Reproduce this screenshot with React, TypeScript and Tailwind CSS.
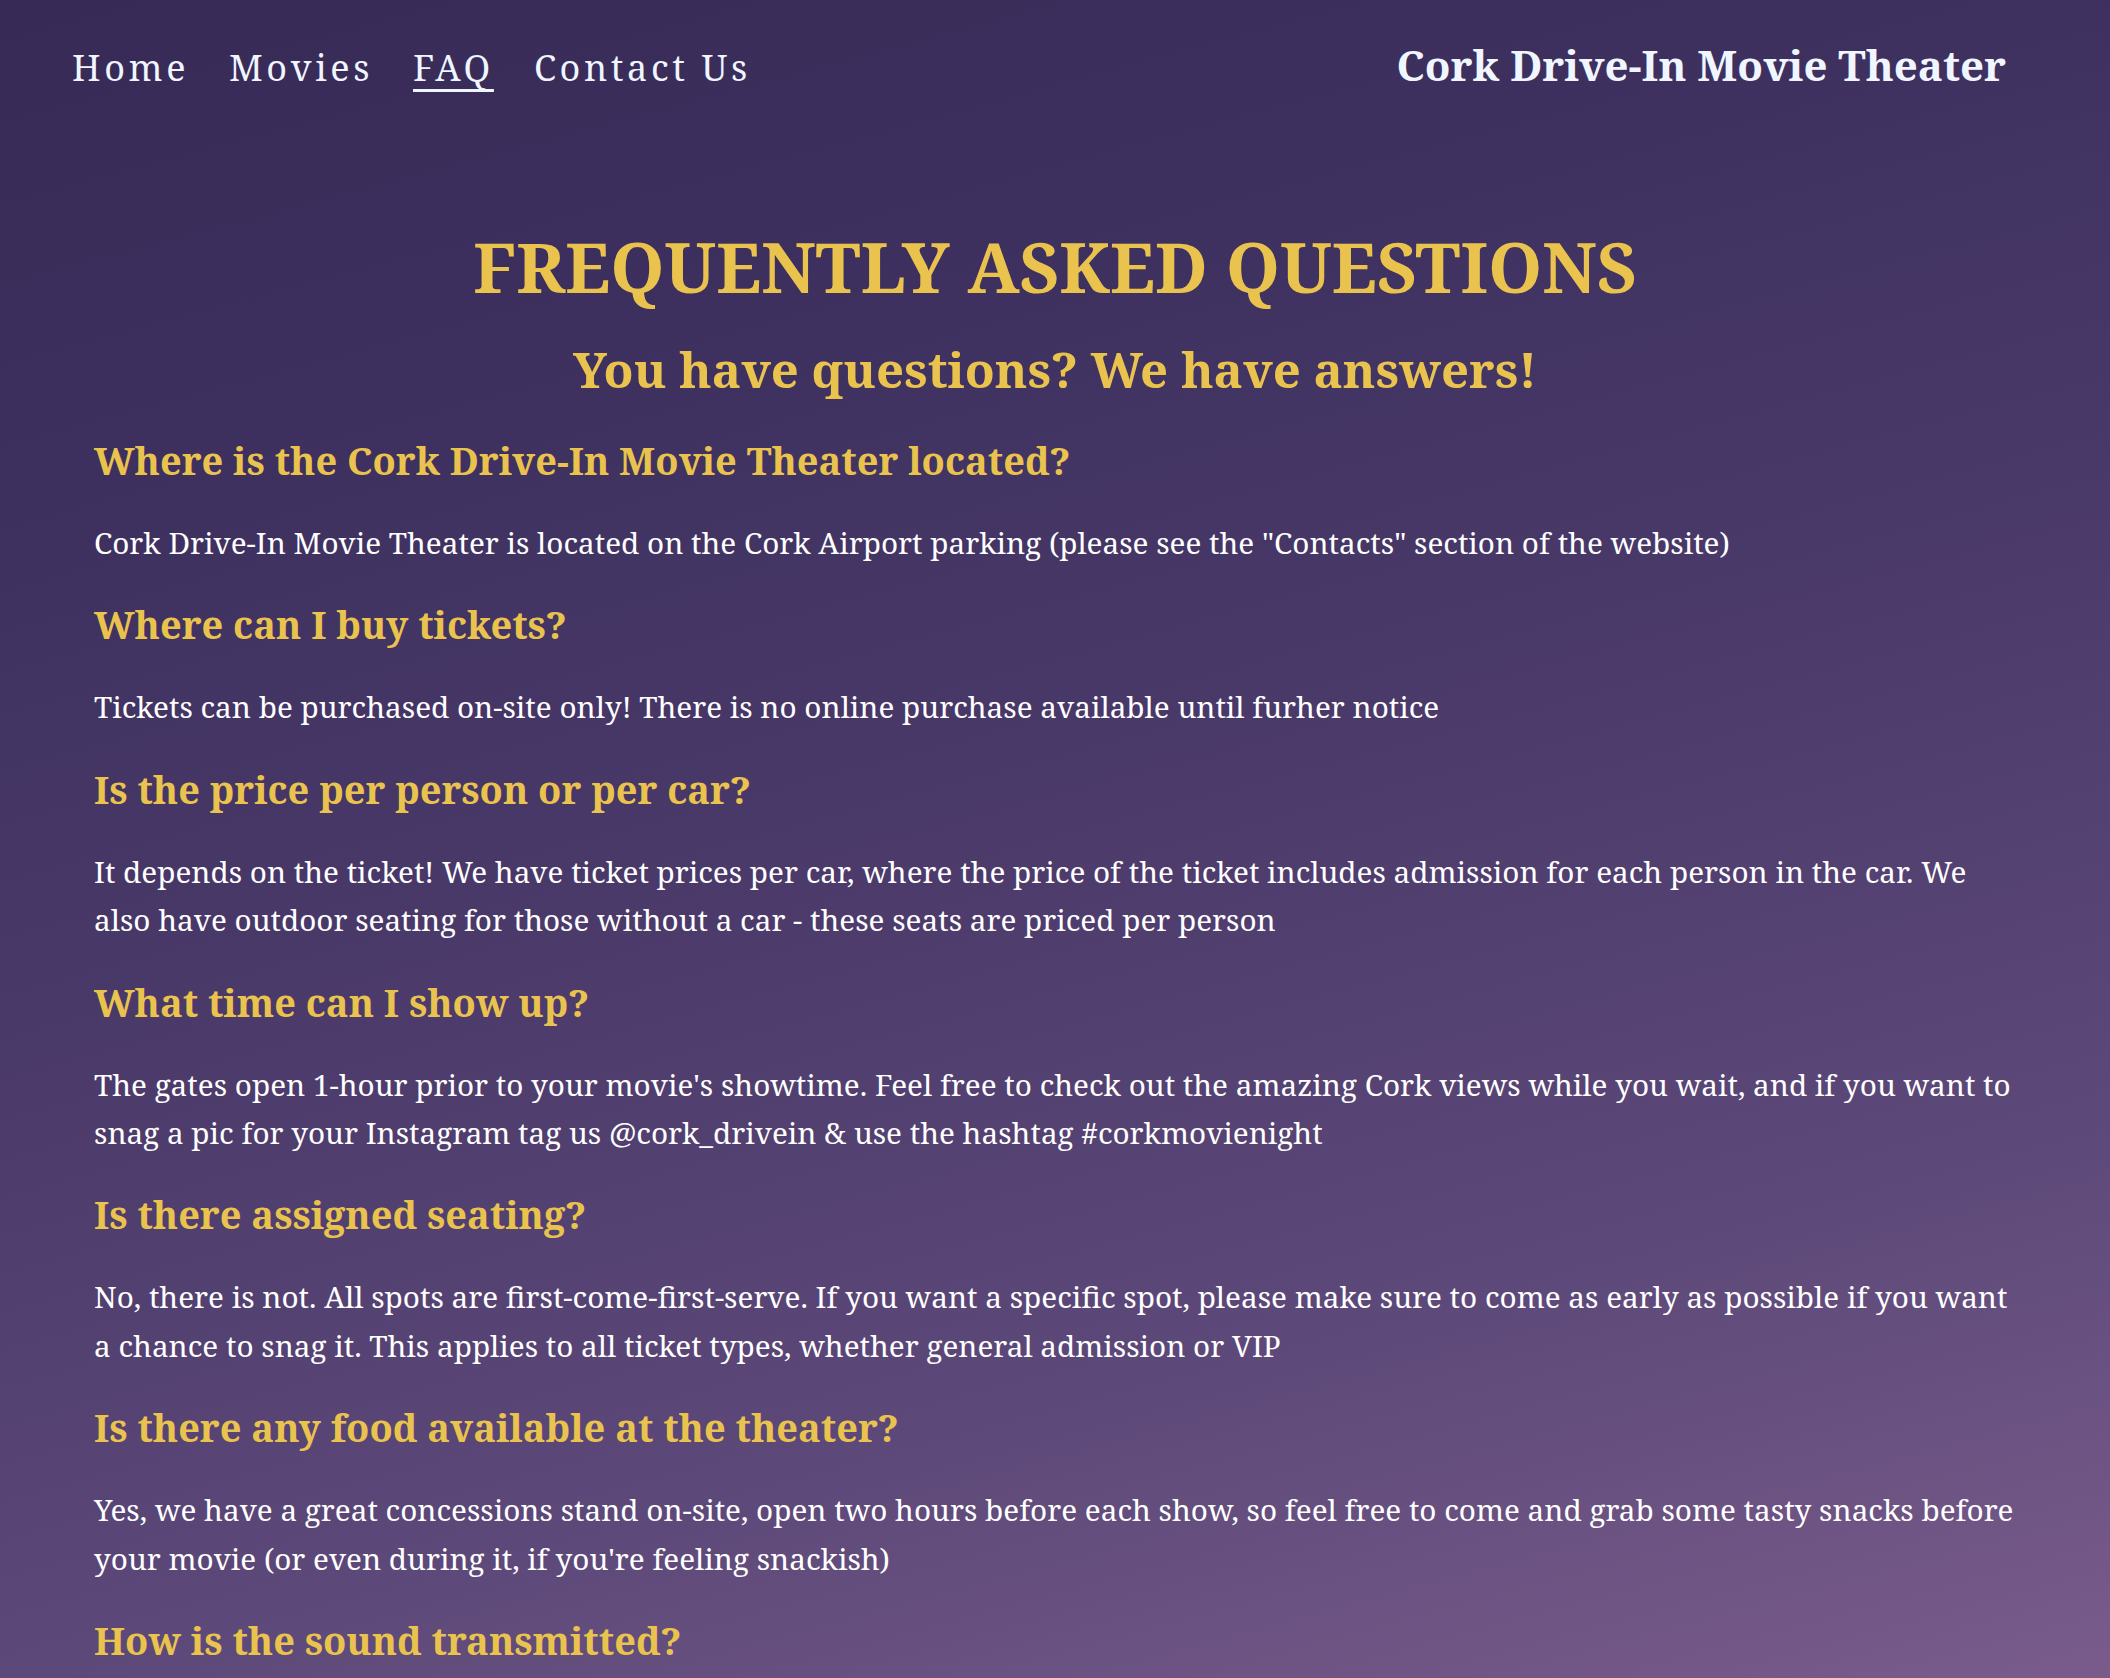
const navLinks = ["Home", "Movies", "FAQ", "Contact Us"];

const faqs = [
  {
    q: "Where is the Cork Drive-In Movie Theater located?",
    a: 'Cork Drive-In Movie Theater is located on the Cork Airport parking (please see the "Contacts" section of the website)',
  },
  {
    q: "Where can I buy tickets?",
    a: "Tickets can be purchased on-site only! There is no online purchase available until furher notice",
  },
  {
    q: "Is the price per person or per car?",
    a: "It depends on the ticket! We have ticket prices per car, where the price of the ticket includes admission for each person in the car. We also have outdoor seating for those without a car - these seats are priced per person",
  },
  {
    q: "What time can I show up?",
    a: "The gates open 1-hour prior to your movie's showtime. Feel free to check out the amazing Cork views while you wait, and if you want to snag a pic for your Instagram tag us @cork_drivein & use the hashtag #corkmovienight",
  },
  {
    q: "Is there assigned seating?",
    a: "No, there is not. All spots are first-come-first-serve. If you want a specific spot, please make sure to come as early as possible if you want a chance to snag it. This applies to all ticket types, whether general admission or VIP",
  },
  {
    q: "Is there any food available at the theater?",
    a: "Yes, we have a great concessions stand on-site, open two hours before each show, so feel free to come and grab some tasty snacks before your movie (or even during it, if you're feeling snackish)",
  },
  {
    q: "How is the sound transmitted?",
    a: "",
  },
];

function Header() {
  return (
    <header className="flex items-baseline justify-between pl-[72px] pr-[104px] pt-[40px]">
      <nav className="flex items-baseline gap-[40px] text-[36px] leading-[43px] tracking-[3.6px] text-[#f0f6ff]">
        {navLinks.map((link) => (
          <a
            key={link}
            href="#"
            className={
              link === "FAQ"
                ? "underline decoration-[3px] underline-offset-[8px]"
                : ""
            }
          >
            {link}
          </a>
        ))}
      </nav>
      <h1 className="text-[42px] font-bold leading-[50px] text-[#f0f6ff]">
        Cork Drive-In Movie Theater
      </h1>
    </header>
  );
}

export default function App() {
  return (
    <div
      className="min-h-screen bg-[linear-gradient(165deg,#372a56_0%,#3e3160_25%,#4c3b6b_50%,#5e4a7a_75%,#7b5d8c_100%)] text-white"
      style={{ fontFamily: '"Noto Serif", "DejaVu Serif", serif' }}
    >
      <Header />
      <main className="px-[94px] pt-[135px] pb-[20px]">
        <h2 className="text-center text-[69px] font-bold leading-[82px] text-[#e9c34e]">
          FREQUENTLY ASKED QUESTIONS
        </h2>
        <h3 className="mt-[33px] text-center text-[49px] font-bold leading-[59px] text-[#e9c34e]">
          You have questions? We have answers!
        </h3>
        <div className="mt-[38px]">
          {faqs.map((item) => (
            <section key={item.q} className="mb-[34px]">
              <h4 className="text-[38px] font-bold leading-[46px] text-[#e9c34e]">
                {item.q}
              </h4>
              {item.a && (
                <p className="mt-[36px] text-[29.7px] leading-[48.4px]">
                  {item.a}
                </p>
              )}
            </section>
          ))}
        </div>
      </main>
    </div>
  );
}
